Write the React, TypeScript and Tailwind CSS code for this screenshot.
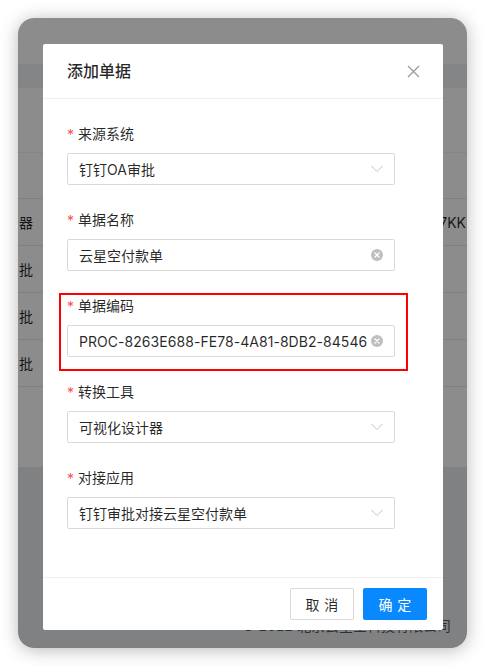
import React from "react";

const font = { fontFamily: 'Inter, "Noto Sans CJK SC", sans-serif' };

function Chevron() {
  return (
    <svg width="12" height="8" viewBox="0 0 12 8" fill="none" className="shrink-0">
      <polyline points="0.5,1 6,6.5 11.5,1" stroke="#c4c4c4" strokeWidth="1" />
    </svg>
  );
}

function ClearIcon() {
  return (
    <svg width="12" height="12" viewBox="0 0 12 12" className="shrink-0">
      <circle cx="6" cy="6" r="6" fill="#bfbfbf" />
      <path d="M4 4 L8 8 M8 4 L4 8" stroke="#fff" strokeWidth="1.3" strokeLinecap="round" />
    </svg>
  );
}

type Field = { label: string; value: string; kind: "select" | "input"; highlight?: boolean };

const fields: Field[] = [
  { label: "来源系统", value: "钉钉OA审批", kind: "select" },
  { label: "单据名称", value: "云星空付款单", kind: "input" },
  { label: "单据编码", value: "PROC-8263E688-FE78-4A81-8DB2-84546", kind: "input", highlight: true },
  { label: "转换工具", value: "可视化设计器", kind: "select" },
  { label: "对接应用", value: "钉钉审批对接云星空付款单", kind: "select" },
];

function FormItem({ f }: { f: Field }) {
  return (
    <div className="relative mb-[23px]">
      {f.highlight && (
        <div className="absolute left-[-8px] top-[-1px] w-[349px] h-[78px] border-2 border-[#ff0000] pointer-events-none" />
      )}
      <div className="flex items-center h-[22px] text-[14px] text-[rgba(0,0,0,0.85)]">
        <span className="text-[#ff4d4f] mr-[4px] text-[14px] leading-none mt-[3px]">*</span>
        <span>{f.label}</span>
      </div>
      <div className="mt-[9px] w-[328px] h-[32px] border border-[#d9d9d9] rounded-[2px] bg-white flex items-center pl-[11px] pr-[11px]">
        <div
          className={
            "flex-1 min-w-0 whitespace-nowrap text-[14px] text-[rgba(0,0,0,0.85)]" +
            (f.highlight ? " tracking-[0.05px]" : "")
          }
        >
          {f.value}
        </div>
        {f.kind === "select" ? <Chevron /> : <ClearIcon />}
      </div>
    </div>
  );
}

function BgRow({ left, right }: { left: string; right?: string }) {
  return (
    <div className="h-[47px] border-t border-[#e8e8e8] flex items-center justify-between text-[14px] text-[rgba(0,0,0,0.85)] whitespace-nowrap">
      <span className="ml-[1px]">{left}</span>
      {right && <span className="mr-[1px]">{right}</span>}
    </div>
  );
}

export default function App() {
  return (
    <div className="w-[485px] h-[666px] bg-white p-[18px]" style={font}>
      <div className="relative w-[449px] h-[630px] rounded-[16px] overflow-hidden shadow-[0_2px_18px_rgba(0,0,0,0.28)]">
        {/* page behind the modal */}
        <div className="flex flex-col h-full bg-white">
          <div className="h-[46px]" />
          <div className="h-[24px] bg-[#f0f2f5]" />
          <div className="h-[64px]" />
          <div className="h-[46px] border-t border-[#f2f2f2]" />
          <BgRow left="器" right="7KK" />
          <BgRow left="批" />
          <BgRow left="批" />
          <BgRow left="批" />
          <div className="h-[81px] border-t border-[#e8e8e8]" />
          <div className="flex-1 bg-[#e9ebef] flex flex-col justify-end items-end pr-[16px] pb-[11px]">
            <span className="text-[14px] leading-[22px] text-[rgba(0,0,0,0.65)]">© 2022 北京云星空科技有限公司</span>
          </div>
        </div>
        <div className="absolute inset-0 bg-black/45" />

        {/* modal */}
        <div className="absolute left-[25px] top-[26px] w-[400px] bg-white rounded-[2px] flex flex-col">
          <div className="h-[55px] border-b border-[#f0f0f0] flex items-center justify-between px-6">
            <span className="text-[16px] font-medium text-[rgba(0,0,0,0.85)]">添加单据</span>
            <svg width="13" height="13" viewBox="0 0 13 13" className="mr-[-1px]">
              <path d="M1 1 L12 12 M12 1 L1 12" stroke="#9a9a9a" strokeWidth="1.3" />
            </svg>
          </div>
          <div className="px-6 pt-[23px] pb-[25px]">
            {fields.map((f) => (
              <FormItem key={f.label} f={f} />
            ))}
          </div>
          <div className="border-t border-[#f0f0f0] py-[10px] px-4 flex justify-end gap-[9px]">
            <button className="w-[64px] h-[32px] border border-[#d9d9d9] rounded-[2px] bg-white text-[14px] text-[rgba(0,0,0,0.85)]">
              <span className="tracking-[0.34em] mr-[-0.34em]">取消</span>
            </button>
            <button className="w-[64px] h-[32px] rounded-[2px] bg-[#0a89ff] text-[14px] text-white">
              <span className="tracking-[0.34em] mr-[-0.34em]">确定</span>
            </button>
          </div>
        </div>
      </div>
    </div>
  );
}
